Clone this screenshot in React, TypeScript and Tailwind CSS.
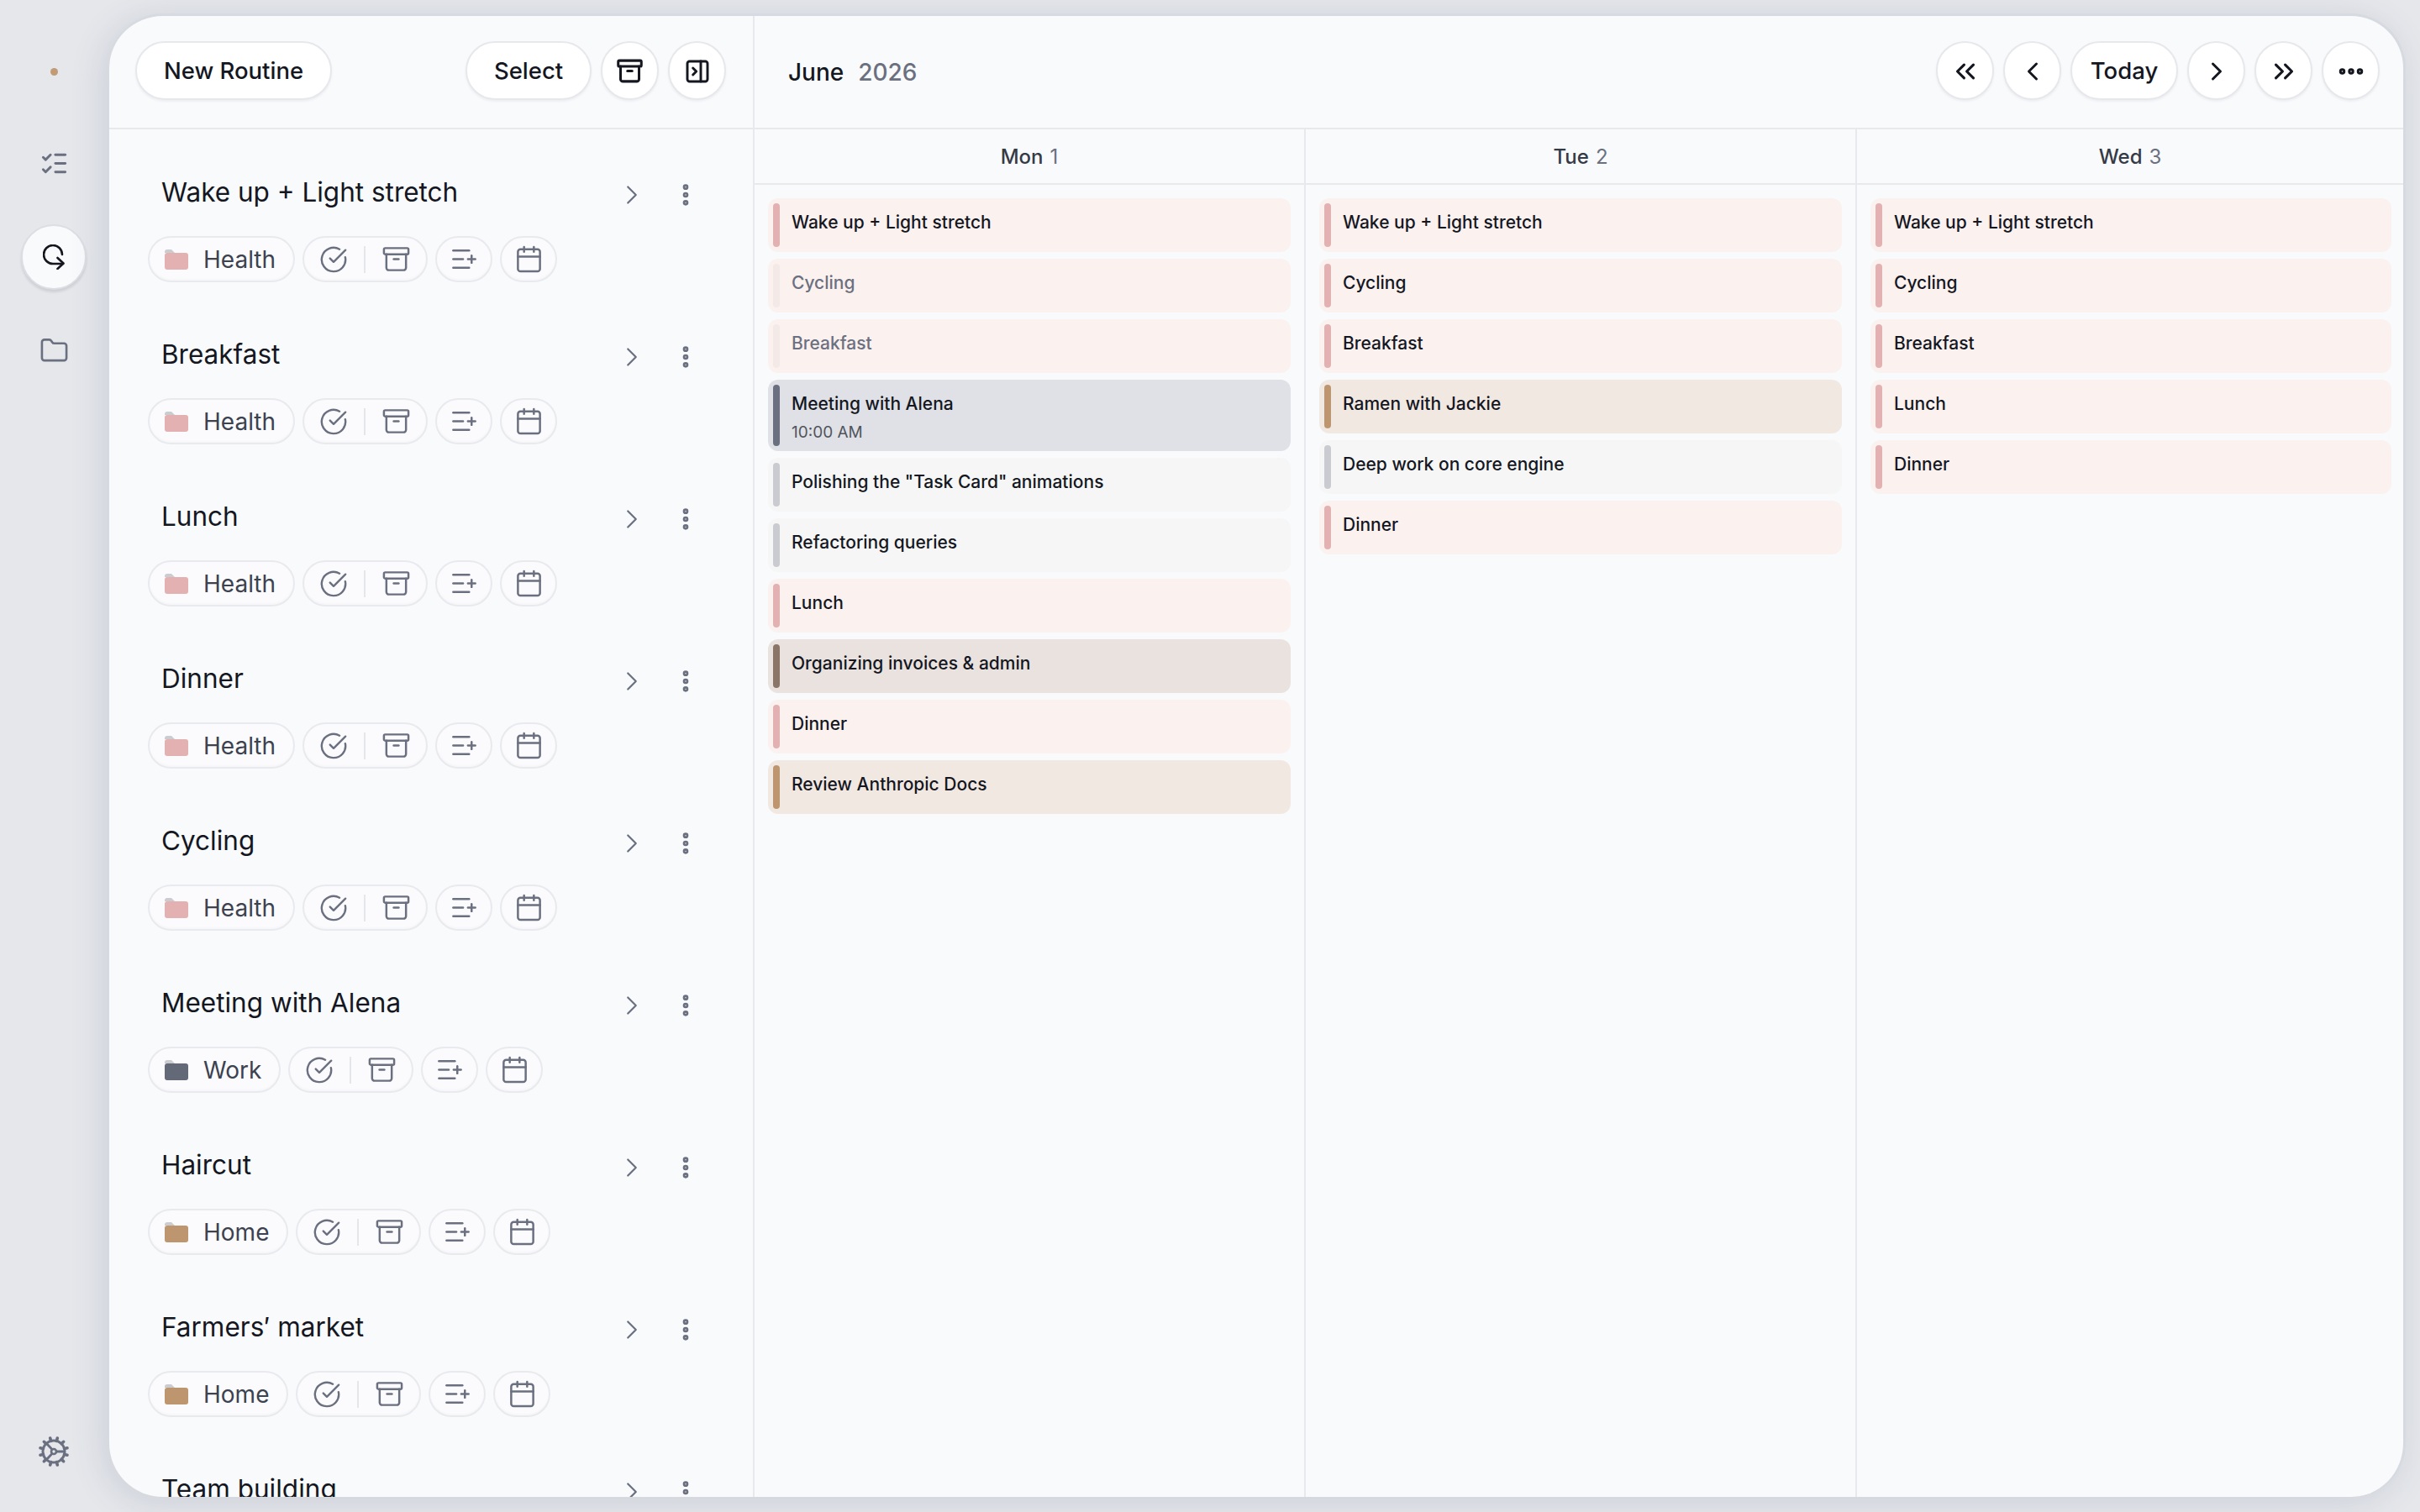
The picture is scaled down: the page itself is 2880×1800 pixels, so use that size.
import { Archive, Calendar, ChevronLeft, ChevronRight, ChevronsLeft, ChevronsRight, CircleCheckBig, Ellipsis, EllipsisVertical, Folder, ListChecks, ListPlus, PanelRightClose } from "lucide-react"

const PINK = { bg: "bg-[#fbf1ef]", bar: "bg-[#e3b1b2]" }
const SLATE = { bg: "bg-[#dfe1e6]", bar: "bg-[#6b7080]" }
const LIGHT = { bg: "bg-[#f5f6f5]", bar: "bg-[#c9cbd0]" }
const TAN = { bg: "bg-[#f2e8e2]", bar: "bg-[#bd9670]" }
const BROWN = { bg: "bg-[#e9e2de]", bar: "bg-[#8a7568]" }

type Task = { title: string; time?: string; done?: boolean; tone: { bg: string; bar: string } }

const days: { name: string; num: number; col: string; list: string; tasks: Task[] }[] = [
    {
        name: "Mon", num: 1, col: "w-[656px] border-r-2 border-[#e8e9ed]", list: "pr-[16px]", tasks: [
            { title: "Wake up + Light stretch", tone: PINK },
            { title: "Cycling", tone: PINK, done: true },
            { title: "Breakfast", tone: PINK, done: true },
            { title: "Meeting with Alena", time: "10:00 AM", tone: SLATE },
            { title: 'Polishing the "Task Card" animations', tone: LIGHT },
            { title: "Refactoring queries", tone: LIGHT },
            { title: "Lunch", tone: PINK },
            { title: "Organizing invoices & admin", tone: BROWN },
            { title: "Dinner", tone: PINK },
            { title: "Review Anthropic Docs", tone: TAN },
        ],
    },
    {
        name: "Tue", num: 2, col: "w-[656px] border-r-2 border-[#e8e9ed]", list: "pr-[16px]", tasks: [
            { title: "Wake up + Light stretch", tone: PINK },
            { title: "Cycling", tone: PINK },
            { title: "Breakfast", tone: PINK },
            { title: "Ramen with Jackie", tone: TAN },
            { title: "Deep work on core engine", tone: LIGHT },
            { title: "Dinner", tone: PINK },
        ],
    },
    {
        name: "Wed", num: 3, col: "flex-1", list: "pr-[14px]", tasks: [
            { title: "Wake up + Light stretch", tone: PINK },
            { title: "Cycling", tone: PINK },
            { title: "Breakfast", tone: PINK },
            { title: "Lunch", tone: PINK },
            { title: "Dinner", tone: PINK },
        ],
    },
]

const routines = [
    { title: "Wake up + Light stretch", folder: "Health", color: "#e3b1b2", w: "w-[175px]" },
    { title: "Breakfast", folder: "Health", color: "#e3b1b2", w: "w-[175px]" },
    { title: "Lunch", folder: "Health", color: "#e3b1b2", w: "w-[175px]" },
    { title: "Dinner", folder: "Health", color: "#e3b1b2", w: "w-[175px]" },
    { title: "Cycling", folder: "Health", color: "#e3b1b2", w: "w-[175px]" },
    { title: "Meeting with Alena", folder: "Work", color: "#646977", w: "w-[158px]" },
    { title: "Haircut", folder: "Home", color: "#bd9670", w: "w-[167px]" },
    { title: "Farmers\u2032 market", folder: "Home", color: "#bd9670", w: "w-[167px]" },
    { title: "Team building", folder: "Work", color: "#646977", w: "w-[158px]" },
]

const pill = "flex items-center justify-center rounded-full border-2 border-[#e7e8ec] bg-white pt-[2px] shadow-[0_2px_3px_rgba(20,24,40,0.05)]"
const chip = "flex h-[55px] items-center rounded-full border-2 border-[#e9eaee] bg-[#fbfbfd] shadow-[inset_0_-2px_2px_rgba(20,24,40,0.02)]"

function FolderGlyph({ color }: { color: string }) {
    return (
        <svg width="28" height="24" viewBox="0 0 28 24" className="shrink-0">
            <path d="M0 3a3 3 0 0 1 3-3h5l4 4H0z" fill="#cbccd0" />
            <rect x="0" y="4" width="28" height="20" rx="3" fill={color} />
        </svg>
    )
}

function RepeatGlyph() {
    return (
        <svg width="26" height="30" viewBox="0 0 26 30" fill="none" stroke="#14171f" strokeWidth="2.6" strokeLinecap="round" strokeLinejoin="round">
            <path d="M23 12 A11 11 0 1 0 12 23 H24" />
            <path d="M17.5 16 L24.5 22.5 L17.5 29" />
        </svg>
    )
}

function GearGlyph() {
    const teeth = [0, 30, 60, 90, 120, 150, 180, 210, 240, 270, 300, 330]
    return (
        <svg width="36" height="36" viewBox="0 0 36 36" fill="none" stroke="#6b7080" strokeWidth="3">
            <circle cx="18" cy="18" r="13" />
            {teeth.map(a => (
                <path key={a} d="M18 1.5 V5" strokeLinecap="round" strokeWidth="3.6" transform={`rotate(${a + 15} 18 18)`} />
            ))}
            <circle cx="18" cy="18" r="3" strokeWidth="2.6" />
            <path d="M16 15.5 L9 8 M16 20.5 L9 28 M21 18 H31" strokeWidth="2.8" />
        </svg>
    )
}

function Rail() {
    return (
        <div className="flex w-[130px] shrink-0 flex-col items-center pr-[2px]">
            <div className="mt-[81px] h-[9px] w-[9px] rounded-full bg-[#c29a76]" />
            <div className="mt-[89px] flex h-[30px] items-center justify-center">
                <ListChecks size={35} strokeWidth={2} color="#6b7080" />
            </div>
            <div className="mt-[58px] flex h-[78px] w-[78px] items-center justify-center rounded-full border-2 border-[#dcdee4] bg-[#f9fafc] shadow-[0_3px_3px_rgba(40,44,60,0.12)]">
                <RepeatGlyph />
            </div>
            <div className="mt-[56px] flex h-[32px] items-center justify-center">
                <Folder size={35} strokeWidth={1.8} color="#6b7080" />
            </div>
            <div className="mt-auto mb-[54px]">
                <GearGlyph />
            </div>
        </div>
    )
}

function RoutineRow({ routine }: { routine: typeof routines[number] }) {
    return (
        <div className="h-[193px] shrink-0 pr-[64px] pl-[62px]">
            <div className="flex h-[48px] items-center justify-between">
                <p className="text-[31.5px] leading-[40px] text-[#14171f]">{routine.title}</p>
                <div className="flex items-center gap-[29px] pt-[6px]">
                    <ChevronRight size={38} strokeWidth={1.4} color="#6b7080" />
                    <EllipsisVertical size={32} strokeWidth={3} color="#6b7080" />
                </div>
            </div>
            <div className="-ml-[16px] mt-[28px] flex gap-[9px]">
                <div className={`${chip} ${routine.w} pl-[18px]`}>
                    <FolderGlyph color={routine.color} />
                    <span className="ml-[18px] text-[28px] text-[#3c4250]">{routine.folder}</span>
                </div>
                <div className={`${chip} w-[149px] justify-center gap-[19px]`}>
                    <CircleCheckBig size={34} strokeWidth={1.7} color="#6b7080" />
                    <div className="h-[32px] w-[2px] bg-[#e5e6ea]" />
                    <Archive size={35} strokeWidth={1.7} color="#6b7080" />
                </div>
                <div className={`${chip} w-[68px] justify-center`}>
                    <ListPlus size={35} strokeWidth={1.7} color="#6b7080" />
                </div>
                <div className={`${chip} w-[68px] justify-center`}>
                    <Calendar size={35} strokeWidth={1.7} color="#6b7080" />
                </div>
            </div>
        </div>
    )
}

function TaskCard({ task }: { task: Task }) {
    return (
        <div className={`flex items-stretch gap-[14px] rounded-[12px] ${task.tone.bg} py-[6px] pl-[6px]`}>
            <div className={`w-[8px] shrink-0 rounded-full ${task.done ? "bg-[#f3e9e6]" : task.tone.bar}`} />
            <div className={`min-h-[52px] font-medium ${task.done ? "text-[#6b7080]" : "text-[#14171f]"}`}>
                <p className="pt-[9px] text-[21px] leading-[28px]">{task.title}</p>
                {task.time && <p className="pt-[6px] pb-[2px] text-[19px] leading-[28px] font-normal text-[#50555f]">{task.time}</p>}
            </div>
        </div>
    )
}

export default function App() {
    return (
        <div className="flex h-[1800px] w-[2880px] overflow-hidden bg-[#e5e7eb] font-['Inter',sans-serif]">
            <Rail />
            <div className="flex-1 pt-[17px] pr-[18px]">
                <div className="flex h-[1765px] overflow-hidden rounded-[64px] border-t-2 border-r-2 border-[#d7dae0] bg-[#f9fafc] shadow-[0_0_0_1px_#d7dae0,-6px_6px_40px_rgba(70,80,110,0.16)]">
                    {/* routines list */}
                    <div className="flex w-[768px] shrink-0 flex-col border-r-2 border-[#e8e9ed]">
                        <div className="flex h-[135px] shrink-0 items-center justify-between border-b-2 border-[#e8e9ed] pr-[32px] pb-[4px] pl-[31px]">
                            <button className={`${pill} h-[70px] w-[234px] text-[27.5px] font-medium text-[#14171f]`}>New Routine</button>
                            <div className="flex gap-[11px]">
                                <button className={`${pill} h-[70px] w-[150px] text-[27.5px] font-medium text-[#14171f]`}>Select</button>
                                <button className={`${pill} h-[70px] w-[69px]`}><Archive size={33} strokeWidth={2.2} color="#14171f" /></button>
                                <button className={`${pill} h-[70px] w-[69px]`}><PanelRightClose size={32} strokeWidth={2.2} color="#14171f" /></button>
                            </div>
                        </div>
                        <div className="flex flex-1 flex-col overflow-hidden pt-[51px]">
                            {routines.map(r => <RoutineRow key={r.title} routine={r} />)}
                        </div>
                    </div>

                    {/* calendar */}
                    <div className="flex min-w-0 flex-1 flex-col">
                        <div className="flex h-[135px] shrink-0 items-center justify-between border-b-2 border-[#e8e9ed] pr-[28px] pb-[4px] pl-[40px]">
                            <p className="pt-[4px] text-[28px] font-medium text-[#14171f]">June<span className="ml-[17px] text-[#6b7080]">2026</span></p>
                            <div className="flex gap-[11px]">
                                <button className={`${pill} h-[70px] w-[69px]`}><ChevronsLeft size={38} strokeWidth={2} color="#14171f" /></button>
                                <button className={`${pill} h-[70px] w-[69px]`}><ChevronLeft size={36} strokeWidth={2} color="#14171f" /></button>
                                <button className={`${pill} h-[70px] w-[128px] text-[27.5px] font-medium text-[#14171f]`}>Today</button>
                                <button className={`${pill} h-[70px] w-[69px]`}><ChevronRight size={36} strokeWidth={2} color="#14171f" /></button>
                                <button className={`${pill} h-[70px] w-[69px]`}><ChevronsRight size={38} strokeWidth={2} color="#14171f" /></button>
                                <button className={`${pill} h-[70px] w-[69px]`}><Ellipsis size={36} strokeWidth={3} color="#14171f" /></button>
                            </div>
                        </div>
                        <div className="flex flex-1">
                            {days.map(day => (
                                <div key={day.name} className={`flex flex-col ${day.col}`}>
                                    <div className="flex h-[66px] shrink-0 items-center justify-center gap-[8px] border-b-2 border-[#e8e9ed] pt-[2px] text-[24px] font-medium text-[#353a47]">
                                        {day.name}<span className="font-normal text-[#6b7080]">{day.num}</span>
                                    </div>
                                    <div className={`flex flex-col gap-[8px] pt-[16px] pl-[16px] ${day.list}`}>
                                        {day.tasks.map(task => <TaskCard key={task.title} task={task} />)}
                                    </div>
                                </div>
                            ))}
                        </div>
                    </div>
                </div>
            </div>
        </div>
    )
}
